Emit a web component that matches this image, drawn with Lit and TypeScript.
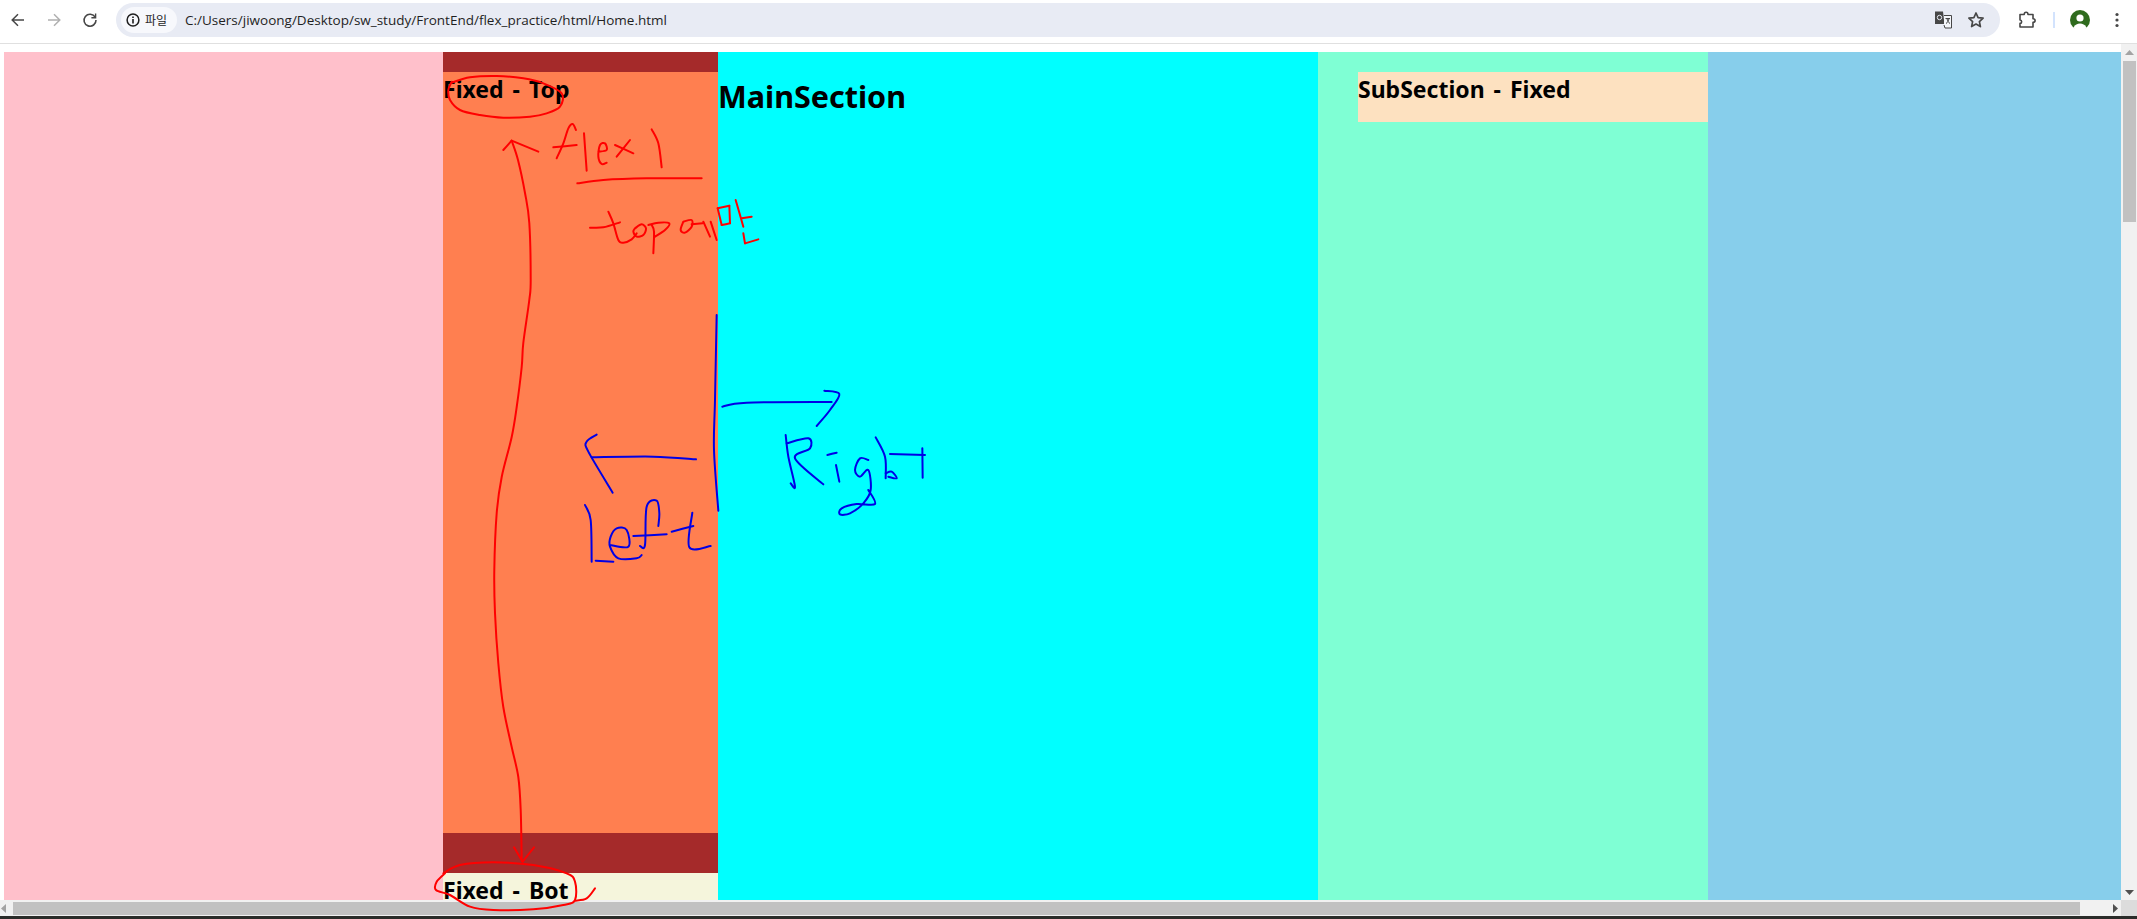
import { LitElement, html, css, svg } from 'lit'
import { customElement } from 'lit/decorators.js'

type Pt = [number, number]

// pen strokes are read off zoomed crops, so each group keeps its crop origin and scale
function pts(s: string, ox = 0, oy = 0, k = 1): Pt[] {
  return s.trim().split(/\s+/).map(p => {
    const [x, y] = p.split(',').map(Number)
    return [ox + x / k, oy + y / k] as Pt
  })
}

// catmull-rom through the points, good enough for handwriting
function smooth(p: Pt[]): string {
  let d = `M${p[0][0]} ${p[0][1]}`
  for (let i = 0; i < p.length - 1; i++) {
    const a = p[i - 1] ?? p[i]
    const b = p[i]
    const c = p[i + 1]
    const e = p[i + 2] ?? c
    const c1x = b[0] + (c[0] - a[0]) / 6
    const c1y = b[1] + (c[1] - a[1]) / 6
    const c2x = c[0] - (e[0] - b[0]) / 6
    const c2y = c[1] - (e[1] - b[1]) / 6
    d += `C${c1x} ${c1y} ${c2x} ${c2y} ${c[0]} ${c[1]}`
  }
  return d
}

const group = (ox: number, oy: number, lines: string[]) => lines.map(l => pts(l, ox, oy, 3))

const redStrokes: Pt[][] = [
  // circle round Fixed - Top, arrow head, flex 1, underline
  ...group(430, 50, [
    '65,98 120,82 200,78 280,85 340,100 395,130 390,170 350,190 300,200 220,203 150,195 90,180 60,150 55,120 65,95',
    '220,300 245,272',
    '245,272 325,305',
    '380,325 400,280 415,235 428,222 438,240',
    '370,292 440,285',
    '462,250 470,362',
    '505,305 530,300 525,280 510,285 505,320 515,342 530,338',
    '555,285 610,310',
    '600,270 560,320',
    '665,238 685,280 695,352',
    '442,400 520,390 650,385 815,385',
  ]),
  // top에만
  ...group(570, 190, [
    '60,113 100,112 150,97',
    '115,65 130,100 145,150 160,158 185,148 200,130',
    '195,115 215,103 228,115 220,135 200,140 190,125 195,115',
    '250,190 252,125 245,105',
    '235,105 265,98 298,100 285,120 255,140',
    '340,95 365,90 365,110 345,128 332,120 340,95',
    '365,103 398,100',
    '400,95 420,140',
    '422,95 440,150',
    '443,55 478,47',
    '478,47 480,100',
    '480,100 455,105',
    '455,105 443,55',
    '497,30 520,110',
    '515,85 545,80',
    '520,130 525,160',
    '525,160 565,148',
  ]),
  // long arrow from bottom block up to the top block
  pts('511.7,140.7 518,160 525,193 529.3,223 530.7,280 529.3,300 523.3,343 521.7,367 516.7,407 511.7,437 501.7,477 496.7,513 494.3,570 495,613 498.3,663 503.3,707 511.7,747 518.3,777 520.7,810 521.7,861'),
  ...group(420, 810, [
    '282,112 308,155',
    '308,155 342,112',
    '70,190 120,165 220,157 340,165 440,190 465,215 465,270 430,285 340,298 220,300 150,290 90,255 48,240 50,215 75,190',
    '465,272 500,265 525,235',
  ]),
]

const blueStrokes: Pt[][] = group(480, 300, [
  '710,45 705,300 702,450 715,632',
  '727,320 800,308 1055,306',
  '1033,272 1078,282 1050,330 1010,378',
  '648,478 520,470 335,472',
  '350,404 320,425 325,455 398,578',
  '315,615 332,660 335,785',
  '347,782 400,785',
  '390,735 445,740 440,690 410,685 392,710 390,740 415,775 470,775 485,765',
  '460,708 560,703',
  '480,738 495,735 500,620 530,602 538,640 535,678',
  '575,695 640,678',
  '637,638 628,742 692,738',
  '917,405 925,470 945,560 932,550',
  '920,430 985,415 990,445 945,475 1030,553',
  '1042,465 1070,458',
  '1068,495 1078,545',
  '1165,480 1140,475 1125,510 1140,530 1165,510 1172,570 1150,610 1110,640 1080,643 1085,625 1130,612 1185,612 1165,570',
  '1187,412 1215,470 1217,535',
  '1217,520 1235,515 1250,535 1225,530',
  '1230,462 1335,465',
  '1327,445 1328,533',
])

@customElement('app-root')
export class AppRoot extends LitElement {
  static styles = css`
    :host {
      display: block;
      position: relative;
      height: 100vh;
      overflow: hidden;
      background: #fff;
      font-family: "Noto Sans", "Noto Sans CJK KR", sans-serif;
      color: #000;
    }
    .shell { display: flex; flex-direction: column; height: 100%; }

    .toolbar {
      flex: 0 0 43px;
      box-sizing: border-box;
      display: flex;
      align-items: center;
      padding: 3px 0 6px;
    }
    .rule { flex: 0 0 1px; background: #e0e0e0; }
    .nav-btn { flex: 0 0 36px; display: flex; justify-content: center; }
    .omnibox {
      flex: 1;
      height: 34px;
      margin-left: 8px;
      display: flex;
      align-items: center;
      background: #e8ebf4;
      border-radius: 17px;
      padding: 0 12px 0 5px;
    }
    .chip {
      display: flex;
      align-items: center;
      gap: 5px;
      height: 26px;
      width: 56px;
      box-sizing: border-box;
      padding-left: 5px;
      border-radius: 13px;
      background: #f7f8fc;
      font-size: 12px;
      color: #1f1f1f;
      white-space: nowrap;
    }
    .url {
      margin-left: 8px;
      font-family: "Open Sans", sans-serif;
      font-size: 13.5px;
      color: #1f1f1f;
      white-space: nowrap;
    }
    .omni-end { margin-left: auto; display: flex; gap: 9px; }
    .omni-end svg { display: block; }
    .extras { display: flex; align-items: center; flex: 0 0 137px; }
    .puzzle { margin-left: 15px; display: block; }
    .sep { width: 2px; height: 16px; margin-left: 14px; background: #d3e3fd; }
    .avatar { margin-left: 15px; display: block; }
    .dots { margin-left: 19px; display: block; }

    .viewport { flex: 1; min-height: 0; display: flex; }
    .page {
      flex: 1;
      display: flex;
      padding: 8px 0 0 4px;
      min-width: 0;
    }
    .pink { flex: 0 0 439px; background: #ffc0cb; }
    .side { flex: 0 0 275px; display: flex; flex-direction: column; background: #ff7f50; }
    .band { background: #a52a2a; }
    .band.top { flex: 0 0 20px; }
    .band.bottom { flex: 0 0 40px; }
    .side-body { flex: 1; }
    /* the label is taller than this block and runs under the scrollbar edge */
    .bot { flex: 0 0 27px; min-height: 0; background: #f5f5dc; }
    .label {
      margin: 0;
      font-size: 23px;
      font-weight: 700;
      line-height: 35px;
      word-spacing: 3px;
      white-space: nowrap;
    }
    .main { flex: 0 0 600px; background: #00ffff; }
    .main h2 {
      margin: 0;
      padding-top: 21px;
      font-size: 30.5px;
      line-height: 46px;
      font-weight: 700;
    }
    .sub {
      flex: 0 0 390px;
      box-sizing: border-box;
      padding: 20px 0 0 40px;
      background: #7fffd4;
    }
    .sub-box { height: 50px; background: #fde1c0; }
    .sky { flex: 1; background: #87ceeb; }

    .vbar {
      flex: 0 0 16px;
      box-sizing: border-box;
      display: flex;
      flex-direction: column;
      align-items: center;
      background: #f1f1f1;
      padding: 6px 0 5px 1px;
    }
    .vthumb { width: 13px; height: 161px; margin-top: 6px; background: #c1c1c1; }
    .vbar .down { margin-top: auto; }
    .hbar { flex: 0 0 16px; display: flex; background: #f1f1f1; }
    .htrack {
      flex: 1;
      display: flex;
      align-items: center;
      padding-left: 1px;
      padding-right: 3px;
    }
    .hthumb { width: 2067px; height: 13px; margin-left: 7px; background: #c1c1c1; }
    .htrack .right { margin-left: auto; }
    .corner { flex: 0 0 16px; background: #dcdcdc; }
    .desktop { flex: 0 0 3px; background: #2a2c29; }

    .ink { position: absolute; inset: 0; width: 100%; height: 100%; pointer-events: none; }
    .ink path { fill: none; stroke-width: 2; stroke-linecap: round; stroke-linejoin: round; }
    .red { stroke: #ff0000; }
    .blue { stroke: #0000e6; }
    .tri { display: block; }
  `

  renderToolbar() {
    return html`
      <div class="toolbar">
        <div class="nav-btn">
          <svg width="16" height="16" viewBox="0 0 16 16" fill="none" stroke="#474747" stroke-width="1.5"><path d="M14 8H2.5M8 2.2 2.2 8 8 13.8"/></svg>
        </div>
        <div class="nav-btn">
          <svg width="16" height="16" viewBox="0 0 16 16" fill="none" stroke="#b0b0b0" stroke-width="1.5"><path d="M2 8h11.5M8 2.2 13.8 8 8 13.8"/></svg>
        </div>
        <div class="nav-btn">
          <svg width="16" height="16" viewBox="0 0 16 16" fill="none" stroke="#474747" stroke-width="1.6"><path d="M13.2 5.2A6 6 0 1 0 14 8"/><path d="M13.6 1.6v4.2H9.4" stroke-width="1.4"/></svg>
        </div>
        <div class="omnibox">
          <div class="chip">
            <svg width="14" height="14" viewBox="0 0 14 14"><circle cx="7" cy="7" r="5.9" fill="none" stroke="#1f1f1f" stroke-width="1.5"/><path d="M6.2 6h1.6v4.4H6.2zM6.2 3.5h1.6v1.5H6.2z" fill="#1f1f1f"/></svg>
            <span>파일</span>
          </div>
          <span class="url">C:/Users/jiwoong/Desktop/sw_study/FrontEnd/flex_practice/html/Home.html</span>
          <div class="omni-end">
            <svg width="24" height="24" viewBox="0 0 24 24"><path d="M4 3.500h8l1.500 12.500H4z" fill="#474747"/><path d="M13 7.500h7.500v12.500H14l-1-3" fill="#f4f6fa" stroke="#474747" stroke-width="1"/><circle cx="8.500" cy="9.500" r="2.200" fill="none" stroke="#e8ebf4" stroke-width="1"/><path d="M14.500 10.500h4.500M16 10.500c.4 2.500 1.400 4 3 5M18 10.500c-.4 2.500-1.400 4-3 5" fill="none" stroke="#474747" stroke-width="1"/></svg>
            <svg width="24" height="24" viewBox="0 0 24 24"><path d="m12 5 2.100 4.600 5 .6-3.700 3.400 1 5L12 16.100 7.600 18.600l1-5-3.700-3.400 5-.6z" fill="none" stroke="#474747" stroke-width="1.700" stroke-linejoin="round"/></svg>
          </div>
        </div>
        <div class="extras">
          <svg class="puzzle" width="24" height="24" viewBox="0 0 24 24"><path d="M5 6.500h4.200c0-3 3.800-3 3.800 0h5v4.200c2.800 0 2.800 3.600 0 3.600V19H5v-3.600c2.200 0 2.200-3.400 0-3.400z" fill="none" stroke="#474747" stroke-width="1.600" stroke-linejoin="round"/></svg>
          <div class="sep"></div>
          <svg class="avatar" width="20" height="20" viewBox="0 0 20 20"><circle cx="10" cy="10" r="10" fill="#2f6b1e"/><circle cx="10" cy="8" r="3.600" fill="#fff"/><path d="M3.500 17.500c1.500-3 4-4 6.500-4s5 1 6.500 4L14 20H6z" fill="#fff"/></svg>
          <svg class="dots" width="16" height="16" viewBox="0 0 16 16" fill="#474747"><circle cx="8" cy="2.500" r="1.600"/><circle cx="8" cy="8" r="1.600"/><circle cx="8" cy="13.500" r="1.600"/></svg>
        </div>
      </div>
    `
  }

  renderInk() {
    return html`
      <svg class="ink" viewBox="0 0 2137 919">
        ${redStrokes.map(s => svg`<path class="red" d=${smooth(s)}></path>`)}
        ${blueStrokes.map(s => svg`<path class="blue" d=${smooth(s)}></path>`)}
      </svg>
    `
  }

  render() {
    return html`
      <div class="shell">
        ${this.renderToolbar()}
        <div class="rule"></div>
        <div class="viewport">
          <div class="page">
            <div class="pink"></div>
            <div class="side">
              <div class="band top"></div>
              <div class="side-body"><h3 class="label">Fixed - Top</h3></div>
              <div class="band bottom"></div>
              <div class="bot"><h3 class="label">Fixed - Bot</h3></div>
            </div>
            <div class="main"><h2>MainSection</h2></div>
            <div class="sub">
              <div class="sub-box"><h3 class="label">SubSection - Fixed</h3></div>
            </div>
            <div class="sky"></div>
          </div>
          <div class="vbar">
            <svg class="tri" width="9" height="5" viewBox="0 0 9 5"><path d="M4.500 0 9 5H0z" fill="#a3a3a3"/></svg>
            <div class="vthumb"></div>
            <svg class="tri down" width="9" height="5" viewBox="0 0 9 5"><path d="M4.500 5 9 0H0z" fill="#505050"/></svg>
          </div>
        </div>
        <div class="hbar">
          <div class="htrack">
            <svg class="tri" width="5" height="9" viewBox="0 0 5 9"><path d="M0 4.500 5 0v9z" fill="#a3a3a3"/></svg>
            <div class="hthumb"></div>
            <svg class="tri right" width="5" height="9" viewBox="0 0 5 9"><path d="M5 4.500 0 0v9z" fill="#505050"/></svg>
          </div>
          <div class="corner"></div>
        </div>
        <div class="desktop"></div>
      </div>
      ${this.renderInk()}
    `
  }
}
